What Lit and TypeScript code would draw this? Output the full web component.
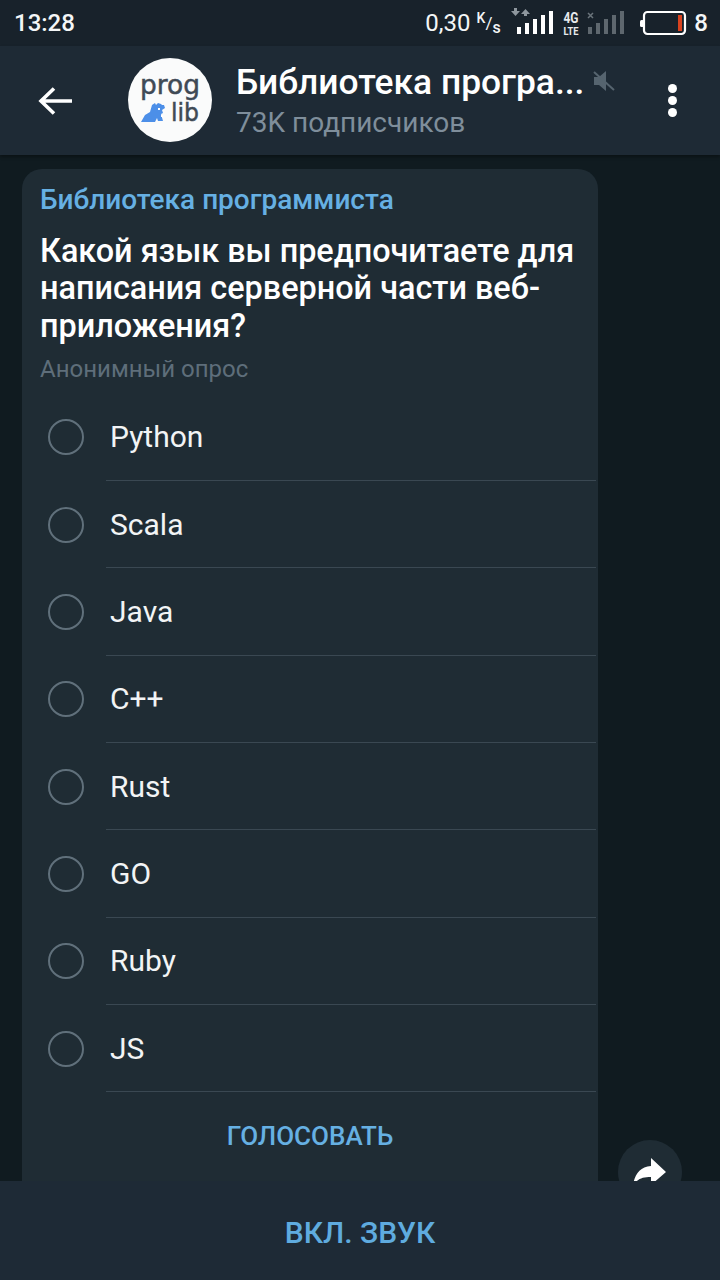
import { LitElement, html, css, svg } from "lit";
import { customElement } from "lit/decorators.js";

const OPTIONS = ["Python", "Scala", "Java", "C++", "Rust", "GO", "Ruby", "JS"];

const bars = (fill: string, x0: number) =>
  [7, 11, 15, 19, 23].map(
    (h, i) => svg`<rect x=${x0 + i * 8} y=${29 - h} width="4" height=${h} fill=${fill}></rect>`
  );

@customElement("app-root")
export class AppRoot extends LitElement {
  static styles = css`
    :host {
      display: flex;
      flex-direction: column;
      width: 720px;
      height: 1280px;
      overflow: hidden;
      background: #101b20;
      font-family: Roboto, "Liberation Sans", sans-serif;
      color: #fff;
    }
    .status {
      flex: 0 0 46px;
      display: flex;
      align-items: center;
      justify-content: space-between;
      background: #18222b;
      padding: 0 12px 0 14px;
      box-sizing: border-box;
      font-size: 24px;
      font-weight: 500;
      color: #f4f6f7;
    }
    .status-right {
      display: flex;
      align-items: center;
    }
    .speed {
      font-size: 24px;
      font-weight: 400;
      display: flex;
      align-items: center;
      width: 86px;
      margin-left: -1px;
    }
    .unit {
      display: flex;
      height: 25px;
      margin-left: 6px;
      font-size: 14px;
      font-weight: 500;
      line-height: 14px;
    }
    .unit .hi {
      align-self: flex-start;
    }
    .unit .mid {
      align-self: center;
      font-weight: 400;
      font-size: 17px;
      line-height: 17px;
    }
    .unit .lo {
      align-self: flex-end;
      font-size: 16px;
      line-height: 16px;
    }
    .status svg {
      display: block;
    }
    .batt-num {
      font-size: 24px;
      font-weight: 500;
      margin-left: 7px;
    }
    .header {
      flex: 0 0 109px;
      display: flex;
      align-items: center;
      background: #1e2a35;
      box-shadow: 0 2px 3px rgba(0, 0, 0, 0.35);
      position: relative;
      z-index: 1;
      padding-left: 38px;
      box-sizing: border-box;
    }
    .back {
      flex: 0 0 34px;
      display: block;
    }
    .avatar {
      flex: 0 0 84px;
      height: 84px;
      margin-left: 56px;
      margin-top: -1px;
      border-radius: 50%;
      background: #fafbfb;
      display: block;
    }
    .titles {
      margin-left: 24px;
      flex: 0 0 385px;
      display: flex;
      flex-direction: column;
    }
    .title-row {
      display: flex;
      align-items: flex-start;
      height: 44px;
    }
    .title {
      font-size: 35.4px;
      font-weight: 500;
      line-height: 40px;
      color: #fff;
      white-space: nowrap;
    }
    .mute {
      margin: 7px 0 0 9px;
      display: block;
    }
    .subs {
      font-size: 28px;
      line-height: 34px;
      color: #7f8e9b;
    }
    .dots {
      display: flex;
      flex-direction: column;
      gap: 3px;
      margin-left: 47px;
    }
    .dots i {
      width: 9px;
      height: 9px;
      border-radius: 50%;
      background: #fff;
    }
    .chat {
      flex: 1;
      min-height: 0;
      position: relative;
      overflow: hidden;
      padding: 14px 0 0 22px;
    }
    .card {
      width: 576px;
      background: #1f2c34;
      border-radius: 20px 20px 0 0;
      box-sizing: border-box;
      padding-top: 13px;
    }
    .sender {
      padding-left: 18px;
      font-size: 28px;
      line-height: 36px;
      font-weight: 500;
      color: #66b0e3;
    }
    .question {
      margin-top: 14.5px;
      padding: 0 18px;
      font-size: 32.4px;
      line-height: 37.6px;
      font-weight: 500;
      color: #fff;
    }
    .kind {
      margin-top: 7.5px;
      padding-left: 18px;
      font-size: 24px;
      line-height: 32px;
      color: #5e6e7a;
    }
    .options {
      margin-top: 9px;
    }
    .option {
      display: flex;
      align-items: center;
      height: 87.3px;
      padding-left: 26px;
      box-sizing: border-box;
    }
    .radio {
      flex: 0 0 36px;
      height: 36px;
      box-sizing: border-box;
      border: 2px solid #60707b;
      border-radius: 50%;
    }
    .label {
      flex: 1;
      align-self: stretch;
      display: flex;
      align-items: center;
      margin-left: 22px;
      margin-right: 2px;
      padding-left: 4px;
      box-sizing: border-box;
      font-size: 30px;
      color: #f2f4f5;
      border-bottom: 1.5px solid #3a4852;
    }
    .vote {
      padding-top: 25.5px;
      padding-bottom: 40px;
      text-align: center;
      font-size: 26px;
      line-height: 36px;
      font-weight: 500;
      color: #66b0e3;
    }
    .fab {
      position: absolute;
      left: 618px;
      top: 985px;
      width: 64px;
      height: 64px;
      border-radius: 50%;
      background: #1f2c34;
    }
    .fab svg {
      display: block;
    }
    .footer {
      flex: 0 0 99px;
      display: flex;
      align-items: center;
      justify-content: center;
      background: #1e2a36;
      position: relative;
      z-index: 1;
      font-size: 30px;
      font-weight: 500;
      color: #5fabdf;
      padding-top: 4px;
      box-sizing: border-box;
    }
  `;

  render() {
    return html`
      <div class="status">
        <span>13:28</span>
        <div class="status-right">
          <div class="speed">0,30<span class="unit"><span class="hi">K</span><span class="mid">/</span><span class="lo">s</span></span></div>
          <svg width="44" height="36" viewBox="0 0 44 36">
            <path d="M0 6h3V3h3v3h3l-4.500 5zM10 9h3v2h3V9h3l-4.500-5z" fill="#8e979e"></path>
            ${bars("#fff", 6)}
          </svg>
          <svg width="18" height="30" viewBox="0 0 18 30" style="margin-left:7px">
            <text x="9" y="15" text-anchor="middle" font-size="14" font-weight="700" fill="#e8eaec" font-family="Roboto" textLength="15" lengthAdjust="spacingAndGlyphs">4G</text>
            <text x="9" y="27" text-anchor="middle" font-size="10.500" font-weight="700" fill="#e8eaec" font-family="Roboto" textLength="15" lengthAdjust="spacingAndGlyphs">LTE</text>
          </svg>
          <svg width="40" height="36" viewBox="0 0 40 36" style="margin-left:6px">
            <path d="M2 8l5 5M7 8l-5 5" stroke="#6a747b" stroke-width="1.500"></path>
            ${bars("#5e676e", 2)}
          </svg>
          <svg width="47" height="26" viewBox="0 0 47 26" style="margin-left:14px">
            <rect x="0" y="10" width="4" height="7" rx="1.500" fill="#fff"></rect>
            <rect x="4" y="2" width="41" height="22" rx="3.500" fill="none" stroke="#fff" stroke-width="2.200"></rect>
            <rect x="38" y="5" width="4" height="16" fill="#d8431f"></rect>
          </svg>
          <span class="batt-num">8</span>
        </div>
      </div>

      <div class="header">
        <svg class="back" width="34" height="30" viewBox="0 0 34 30">
          <path d="M2 15h32M16 2.500L3 15l13 12.500" fill="none" stroke="#fff" stroke-width="3.600"></path>
        </svg>
        <svg class="avatar" width="84" height="84" viewBox="0 0 84 84">
          <text x="12" y="36" font-family="DejaVu Sans" font-size="27" textLength="60" lengthAdjust="spacingAndGlyphs" fill="#3f4a55" stroke="#3f4a55" stroke-width="0.500">prog</text>
          <text x="43" y="63" font-family="DejaVu Sans" font-size="25" textLength="28" lengthAdjust="spacingAndGlyphs" fill="#3f4a55" stroke="#3f4a55" stroke-width="0.500">lib</text>
          <path d="M13 64l4-7 5-3 2-7 3-2 1 2 2-2 3 1 1 1 2 0 1 3-3 2 1 3-2 1 2 7h-5l-1-3-2 4z" fill="#4c8fe8"></path>
          <path d="M30 50h2v2h-2zM33 57h2v2h-2z" fill="#fff"></path>
        </svg>
        <div class="titles">
          <div class="title-row">
            <span class="title">Библиотека програ...</span>
            <svg class="mute" width="22" height="24" viewBox="0 0 22 24">
              <path d="M1 8h5l7-6v20l-7-6H1z" fill="#56646f"></path>
              <path d="M1 3l20 18" stroke="#56646f" stroke-width="2"></path>
            </svg>
          </div>
          <span class="subs">73K подписчиков</span>
        </div>
        <div class="dots"><i></i><i></i><i></i></div>
      </div>

      <div class="chat">
        <div class="card">
          <div class="sender">Библиотека программиста</div>
          <div class="question">Какой язык вы предпочитаете для написания серверной части веб-приложения?</div>
          <div class="kind">Анонимный опрос</div>
          <div class="options">
            ${OPTIONS.map(
              (o) => html`<div class="option"><span class="radio"></span><span class="label">${o}</span></div>`
            )}
          </div>
          <div class="vote">ГОЛОСОВАТЬ</div>
        </div>
        <div class="fab">
          <svg width="64" height="64" viewBox="0 0 64 64">
            <path d="M33 18l15 14-15 13v-8c-9 0-14 2-18 9 1-10 6-19 18-20z" fill="#fff"></path>
          </svg>
        </div>
      </div>

      <div class="footer">ВКЛ. ЗВУК</div>
    `;
  }
}
